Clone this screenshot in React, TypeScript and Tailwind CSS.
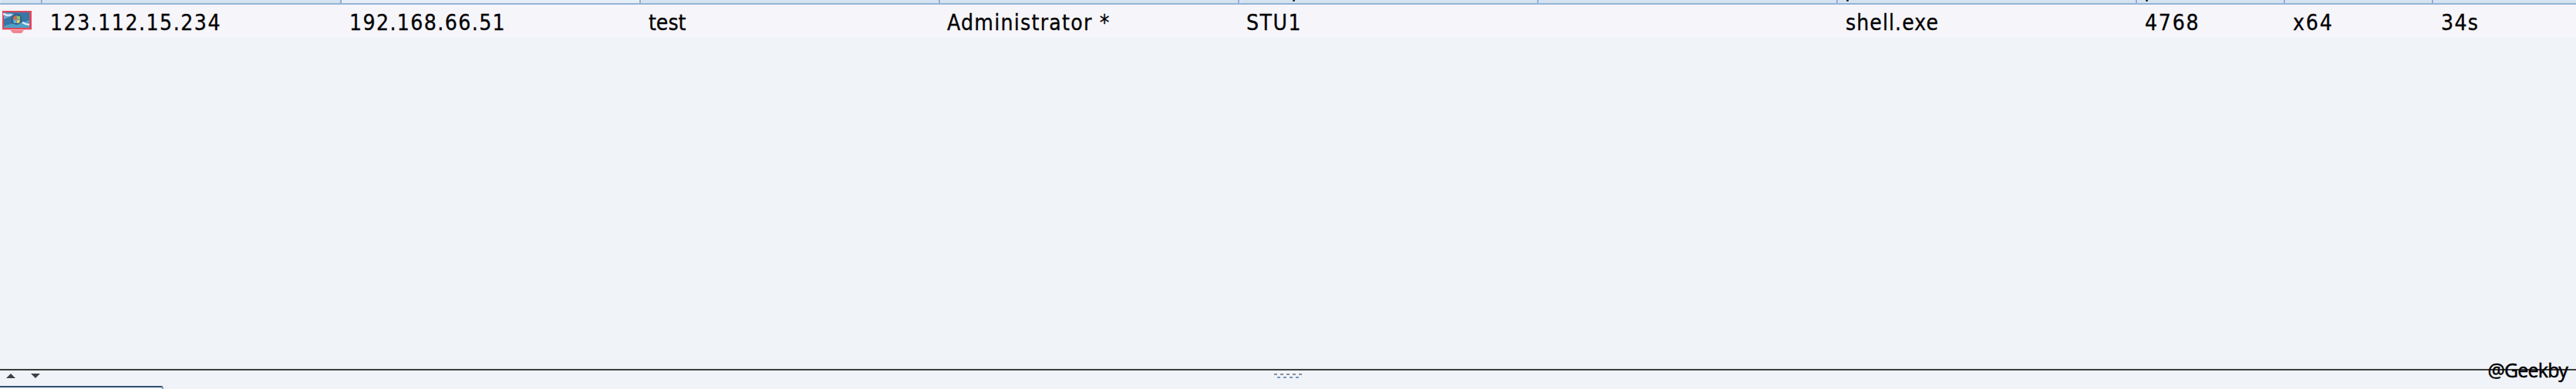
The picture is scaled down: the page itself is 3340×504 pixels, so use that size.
interface Cell {
  text: string;
  width: string;
  tracking: string;
}

interface HeaderColumn {
  width: string;
  hovered?: boolean;
  tail?: string;
}

const headerColumns: HeaderColumn[] = [
  { width: 'w-[55px]' },
  { width: 'w-[388px]' },
  { width: 'w-[388px]', hovered: true },
  { width: 'w-[388px]' },
  { width: 'w-[388px]' },
  { width: 'w-[388px]', tail: 'pl-[68px]' },
  { width: 'w-[388px]' },
  { width: 'w-[388px]', tail: 'pl-[10px]' },
  { width: 'w-[192px]', tail: 'pl-[10px]' },
  { width: 'w-[192px]' },
  { width: 'w-[188px]' },
];

const cells: Cell[] = [
  { text: '123.112.15.234', width: 'w-[388px]', tracking: 'tracking-[1.55px]' },
  { text: '192.168.66.51', width: 'w-[388px]', tracking: 'tracking-[1.45px]' },
  { text: 'test', width: 'w-[387px]', tracking: 'tracking-[0px]' },
  { text: 'Administrator *', width: 'w-[388px]', tracking: 'tracking-[1.3px]' },
  { text: 'STU1', width: 'w-[388px]', tracking: 'tracking-[1.6px]' },
  { text: '', width: 'w-[389px]', tracking: 'tracking-[0px]' },
  { text: 'shell.exe', width: 'w-[388px]', tracking: 'tracking-[1.1px]' },
  { text: '4768', width: 'w-[192px]', tracking: 'tracking-[1.8px]' },
  { text: 'x64', width: 'w-[192px]', tracking: 'tracking-[1.9px]' },
  { text: '34s', width: 'w-[175px]', tracking: 'tracking-[1.4px]' },
];

export default function App() {
  return (
    <div className="flex h-[504px] w-[3340px] flex-col overflow-hidden bg-[#f0f3f8] text-black">
      <div className="flex h-[6px] shrink-0 border-b-2 border-[#94b5d6]">
        {headerColumns.map((column, index) => (
          <div
            key={index}
            className={`h-1 shrink-0 border-r-2 border-l border-r-[#8cb0d6] border-l-[#e3ebf3] ${column.width} ${column.hovered ? 'bg-[#e6eef7]' : 'bg-[#d5e2ef]'} ${column.tail ?? ''}`}
          >
            {column.tail && <div className="h-[2px] w-[3px] rounded-b-sm bg-[#20252c]" />}
          </div>
        ))}
      </div>

      <div className="flex h-[42px] shrink-0 items-start bg-[#f6f5fa]">
        <div className="w-[65px] shrink-0 pt-[7px] pl-[2px]">
          <ComputerIcon />
        </div>
        {cells.map((cell, index) => (
          <div
            key={index}
            className={`shrink-0 whitespace-nowrap font-['DejaVu_Sans_Condensed','DejaVu_Sans',sans-serif] text-[28px] leading-[48px] [font-stretch:condensed] [-webkit-text-stroke:0.3px_black] ${cell.width} ${cell.tracking}`}
          >
            {cell.text}
          </div>
        ))}
      </div>

      <div className="flex-1" />

      <SplitDivider />

      <div className="flex h-1 shrink-0">
        <div className="w-[212px] rounded-tr-[3px] border-t-2 border-r-2 border-t-[#2d506f] border-r-[#7f9bb8]" />
      </div>
    </div>
  );
}

function SplitDivider() {
  return (
    <div className="relative flex h-[22px] shrink-0 border-t-2 border-[#3c3c3c]">
      <svg className="mt-[3px] ml-[8px] h-[8px] w-[45px]" viewBox="0 0 45 8" fill="#3f4144">
        <path d="M0 7 6 1 12 7Z" />
        <path d="M32 1h12l-6 6Z" />
      </svg>
      <svg className="mt-[3px] ml-[1598px] h-[12px] w-[40px]" viewBox="0 0 40 12">
        {[0, 8, 16, 24, 32].map((x) => (
          <rect key={x} x={x + 1} y="1" width="4" height="2" fill="#8b8f94" />
        ))}
        {[4, 12, 20, 28].map((x) => (
          <rect key={x} x={x + 1} y="5" width="4" height="2" fill="#7894bd" />
        ))}
      </svg>
      <span className="absolute top-[-16px] right-[11px] font-['Noto_Sans',sans-serif] text-[25px] leading-[30px] tracking-[-0.9px] [-webkit-text-stroke:0.4px_black]">
        @Geekby
      </span>
    </div>
  );
}

function ComputerIcon() {
  return (
    <svg className="h-[32px] w-[40px]" viewBox="0 0 40 32">
      <path d="M1 1h38v24H1Z" fill="#e0485c" />
      <path d="M1 25h38v1H1Z" fill="#f3b5bf" />
      <path d="M11 26h18l-3 4H15Z" fill="#f0848f" />
      <path d="M3 3h33v20H3Z" fill="#3777a5" />
      <path d="M3 3c6 2 9 0 14 3L3 12Z" fill="#6fa9d0" />
      <path d="M3 21c9-5 22-2 33-8v10H3Z" fill="#4da0c8" />
      <path d="M2 5l6 2 5-1M27 16l4 2 5 1" stroke="#e5f2fa" strokeWidth="2" fill="none" />
      <circle cx="19.500" cy="12" r="7" fill="#315c82" />
      <circle cx="19.500" cy="12" r="5" fill="#6b8fa0" />
      <path d="M16 8h3.500v4H15Z" fill="#dd6545" />
      <path d="M20 8h4v4h-4Z" fill="#8ac06b" />
      <path d="M15 13h4.500v4H16Z" fill="#65b1dc" />
      <path d="M20 13h4l-1 4h-3Z" fill="#f1c75b" />
    </svg>
  );
}
